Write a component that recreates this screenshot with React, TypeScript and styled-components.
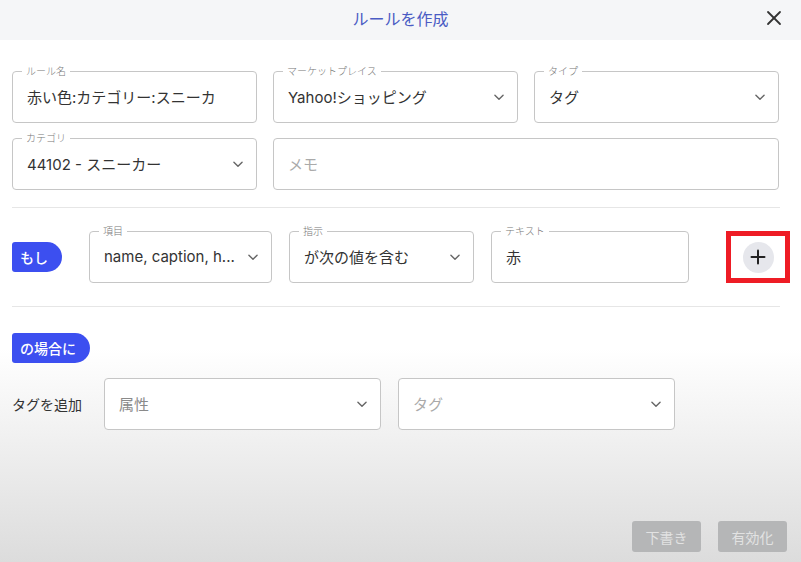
import styled, { createGlobalStyle } from 'styled-components';

const GlobalStyle = createGlobalStyle`
  html, body {
    margin: 0;
    padding: 0;
  }
  body {
    font-family: "Inter", "Noto Sans CJK JP", sans-serif;
    color: #333;
  }
`;

const Modal = styled.div`
  width: 801px;
  height: 562px;
  display: flex;
  flex-direction: column;
  background: linear-gradient(180deg, #ffffff 0%, #ffffff 62%, #dcdcdc 100%);
  overflow: hidden;
`;

const Header = styled.div`
  height: 40px;
  flex-shrink: 0;
  background: #f5f6f8;
  display: flex;
  align-items: center;
  justify-content: center;
  position: relative;
`;

const Title = styled.div`
  font-family: "Noto Sans CJK JP", sans-serif;
  font-size: 16px;
  color: #4b5cc4;
  margin-top: -4px;
`;

const Close = styled.button`
  position: absolute;
  right: 16px;
  top: 7px;
  width: 22px;
  height: 22px;
  border: none;
  background: none;
  padding: 0;
  display: flex;
  align-items: center;
  justify-content: center;
`;

const Body = styled.div`
  flex: 1;
  padding: 31px 21px 0 12px;
  display: flex;
  flex-direction: column;
`;

const Grid = styled.div`
  display: grid;
  grid-template-columns: repeat(3, 245px);
  column-gap: 16px;
  row-gap: 15px;
`;

const Field = styled.div<{ $span?: number; $width?: number }>`
  position: relative;
  height: 52px;
  box-sizing: border-box;
  border: 1px solid #c6c6c6;
  border-radius: 4px;
  background: #fff;
  display: flex;
  align-items: center;
  gap: 6px;
  padding: 0 11px 0 14px;
  grid-column: span ${p => p.$span ?? 1};
  ${p => (p.$width ? `width: ${p.$width}px; flex-shrink: 0;` : '')}
`;

const Legend = styled.span`
  position: absolute;
  left: 9px;
  top: -8px;
  padding: 0 4px;
  background: #fff;
  font-family: "Noto Sans CJK JP", sans-serif;
  font-size: 10px;
  font-weight: 300;
  line-height: 14px;
  color: #777;
`;

const Value = styled.span<{ $muted?: boolean }>`
  flex: 1;
  font-size: 15px;
  color: ${p => (p.$muted ? '#8a8a8a' : '#333')};
  white-space: nowrap;
  overflow: hidden;
  margin-top: -2px;
`;

const Placeholder = styled.span`
  flex: 1;
  font-size: 15px;
  color: #aaa;
  margin-top: -2px;
`;

const Divider = styled.div<{ $top: number }>`
  height: 1px;
  background: #e6e6e6;
  margin-top: ${p => p.$top}px;
`;

const ConditionRow = styled.div`
  display: flex;
  align-items: center;
  margin-top: 23px;
  height: 52px;
`;

const Pill = styled.span<{ $width: number }>`
  display: inline-flex;
  align-items: center;
  justify-content: center;
  width: ${p => p.$width}px;
  height: 30px;
  background: #3c4ff0;
  color: #fff;
  font-family: "Noto Sans CJK JP", sans-serif;
  font-size: 14px;
  font-weight: 500;
  border-radius: 3px 15px 15px 3px;
  flex-shrink: 0;
  box-sizing: border-box;
  padding-right: 6px;
`;

const Fields = styled.div`
  display: flex;
  gap: 17px;
  margin-left: 27px;
  flex-shrink: 0;
`;

const AddBox = styled.div`
  margin-left: 37px;
  width: 64px;
  height: 52px;
  flex-shrink: 0;
  box-sizing: border-box;
  border: 5px solid #ee1c25;
  display: flex;
  align-items: center;
  justify-content: center;
`;

const AddButton = styled.button`
  width: 31px;
  height: 31px;
  border-radius: 50%;
  border: none;
  background: #e6e7ec;
  display: flex;
  align-items: center;
  justify-content: center;
  padding: 0;
`;

const ActionBlock = styled.div`
  margin-top: 26px;
`;

const TagRow = styled.div`
  display: flex;
  align-items: center;
  margin-top: 15px;
  gap: 17px;
`;

const TagLabel = styled.span`
  font-family: "Noto Sans CJK JP", sans-serif;
  font-size: 14px;
  color: #333;
  width: 75px;
`;

const Footer = styled.div`
  margin-top: auto;
  display: flex;
  justify-content: flex-end;
  gap: 17px;
  padding: 0 14px 10px 0;
  margin-right: -21px;
`;

const FooterButton = styled.button`
  width: 69px;
  height: 31px;
  border: none;
  border-radius: 3px;
  background: #b5b6b7;
  color: #e2e2e2;
  font-family: "Noto Sans CJK JP", sans-serif;
  font-size: 14px;
`;

const Chevron = () => (
  <svg width="14" height="14" viewBox="0 0 24 24" fill="none" stroke="#666" strokeWidth="2.4" strokeLinecap="round" strokeLinejoin="round" style={{ flexShrink: 0 }}>
    <polyline points="5 9 12 16 19 9" />
  </svg>
);

export default function App() {
  return (
    <>
      <GlobalStyle />
      <Modal>
        <Header>
          <Title>ルールを作成</Title>
          <Close aria-label="close">
            <svg width="16" height="16" viewBox="0 0 16 16" stroke="#333" strokeWidth="1.8" strokeLinecap="round">
              <line x1="2" y1="2" x2="14" y2="14" />
              <line x1="14" y1="2" x2="2" y2="14" />
            </svg>
          </Close>
        </Header>
        <Body>
          <Grid>
            <Field>
              <Legend>ルール名</Legend>
              <Value>赤い色:カテゴリー:スニーカ</Value>
            </Field>
            <Field>
              <Legend>マーケットプレイス</Legend>
              <Value>Yahoo!ショッピング</Value>
              <Chevron />
            </Field>
            <Field>
              <Legend>タイプ</Legend>
              <Value>タグ</Value>
              <Chevron />
            </Field>
            <Field>
              <Legend>カテゴリ</Legend>
              <Value>44102 - スニーカー</Value>
              <Chevron />
            </Field>
            <Field $span={2}>
              <Placeholder>メモ</Placeholder>
            </Field>
          </Grid>

          <Divider $top={17} />

          <ConditionRow>
            <Pill $width={50}>もし</Pill>
            <Fields>
              <Field $width={183}>
                <Legend>項目</Legend>
                <Value>name, caption, h...</Value>
                <Chevron />
              </Field>
              <Field $width={185}>
                <Legend>指示</Legend>
                <Value>が次の値を含む</Value>
                <Chevron />
              </Field>
              <Field $width={198}>
                <Legend>テキスト</Legend>
                <Value>赤</Value>
              </Field>
            </Fields>
            <AddBox>
              <AddButton aria-label="add">
                <svg width="16" height="16" viewBox="0 0 16 16" stroke="#222" strokeWidth="2" strokeLinecap="round">
                  <line x1="8" y1="1.5" x2="8" y2="14.5" />
                  <line x1="1.5" y1="8" x2="14.5" y2="8" />
                </svg>
              </AddButton>
            </AddBox>
          </ConditionRow>

          <Divider $top={23} />

          <ActionBlock>
            <Pill $width={78}>の場合に</Pill>
            <TagRow>
              <TagLabel>タグを追加</TagLabel>
              <Field $width={277}>
                <Value $muted>属性</Value>
                <Chevron />
              </Field>
              <Field $width={277}>
                <Placeholder>タグ</Placeholder>
                <Chevron />
              </Field>
            </TagRow>
          </ActionBlock>

          <Footer>
            <FooterButton>下書き</FooterButton>
            <FooterButton>有効化</FooterButton>
          </Footer>
        </Body>
      </Modal>
    </>
  );
}
